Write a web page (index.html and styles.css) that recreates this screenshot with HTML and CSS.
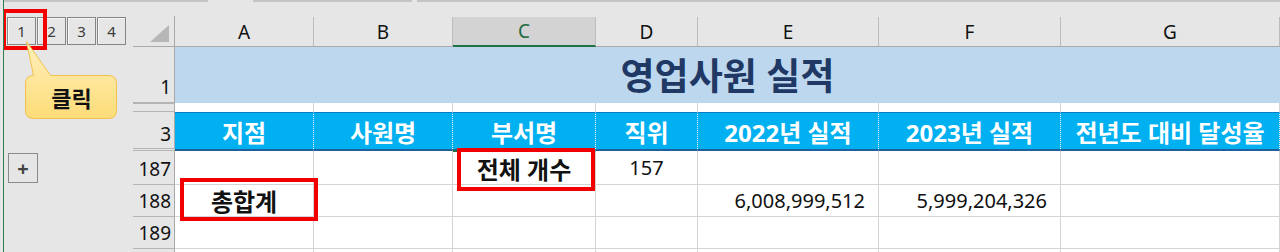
FILE: index.html
```html
<!DOCTYPE html>
<html lang="ko">
<head>
  <meta charset="UTF-8" />
  <title>영업사원 실적</title>
  <link rel="stylesheet" href="styles.css">
</head>
<body>
  <div class="app">
    <div class="top-strip">
      <span class="seg seg-1"></span>
      <span class="seg seg-2"></span>
      <span class="seg seg-3"></span>
    </div>

    <div class="main">
      <aside class="outline">
        <div class="levels">
          <span class="level">1</span>
          <span class="level">2</span>
          <span class="level">3</span>
          <span class="level">4</span>
        </div>
        <span class="expand">+</span>
      </aside>

      <div class="sheet">
        <!-- column headers -->
        <div class="corner">
          <svg width="20" height="18" viewBox="0 0 20 18"><polygon points="19,0 19,17 0,17" fill="#b7b7b7"/></svg>
        </div>
        <div class="ch">A</div>
        <div class="ch">B</div>
        <div class="ch ch-active">C</div>
        <div class="ch">D</div>
        <div class="ch">E</div>
        <div class="ch">F</div>
        <div class="ch">G</div>

        <!-- row 1 -->
        <div class="rh">1</div>
        <div class="title">영업사원 실적</div>

        <!-- row 2 (thin) -->
        <div class="rh rh-thin"></div>
        <div class="c thin"></div><div class="c thin"></div><div class="c thin"></div><div class="c thin"></div>
        <div class="c thin"></div><div class="c thin"></div><div class="c thin"></div>

        <!-- row 3 -->
        <div class="rh rh-gap">3</div>
        <div class="hd">지점</div>
        <div class="hd">사원명</div>
        <div class="hd">부서명</div>
        <div class="hd">직위</div>
        <div class="hd">2022년 실적</div>
        <div class="hd">2023년 실적</div>
        <div class="hd">전년도 대비 달성율</div>

        <!-- row 187 -->
        <div class="rh">187</div>
        <div class="c"></div>
        <div class="c"></div>
        <div class="c center bold active">전체 개수</div>
        <div class="c center">157</div>
        <div class="c"></div>
        <div class="c"></div>
        <div class="c"></div>

        <!-- row 188 -->
        <div class="rh">188</div>
        <div class="c center bold">총합계</div>
        <div class="c"></div>
        <div class="c"></div>
        <div class="c"></div>
        <div class="c num">6,008,999,512</div>
        <div class="c num">5,999,204,326</div>
        <div class="c"></div>

        <!-- row 189 -->
        <div class="rh">189</div>
        <div class="c"></div><div class="c"></div><div class="c"></div><div class="c"></div>
        <div class="c"></div><div class="c"></div><div class="c"></div>

        <!-- row 190 -->
        <div class="rh"></div>
        <div class="c"></div><div class="c"></div><div class="c"></div><div class="c"></div>
        <div class="c"></div><div class="c"></div><div class="c"></div>
      </div>
    </div>

    <!-- annotations -->
    <div class="mark mark-level"></div>
    <div class="callout">
      <svg class="callout-shape" width="102" height="85" viewBox="0 0 102 85">
        <defs>
          <linearGradient id="cg" x1="0" y1="0" x2="0" y2="1">
            <stop offset="0" stop-color="#fff0bd"/>
            <stop offset="1" stop-color="#fddc78"/>
          </linearGradient>
        </defs>
        <path d="M13.5,37.5 L6.5,3.5 L30.5,37.5 H88.5 Q96.5,37.5 96.5,45.5 V72.5 Q96.5,80.5 88.5,80.5 H13.5 Q5.5,80.5 5.5,72.5 V45.5 Q5.5,37.5 13.5,37.5 Z"
              fill="url(#cg)" stroke="#f2c14e" stroke-width="1"/>
      </svg>
      <span class="callout-text">클릭</span>
    </div>
    <div class="mark mark-count"></div>
    <div class="mark mark-total"></div>
  </div>
</body>
</html>
```

FILE: styles.css
```css
body {
  margin: 0;
  padding: 0;
  background-color: #e6e6e6;
  font-family: "Noto Sans", "Noto Sans CJK KR", sans-serif;
  width: 1280px;
  height: 252px;
  overflow: hidden;
}

.app {
  position: relative;
  margin-left: 3px;
  border-left: 1px solid #2f7d4f;
  height: 252px;
  overflow: hidden;
}

/* thin line at the very top */
.top-strip {
  height: 16px;
  display: flex;
  gap: 45px;
}

.seg {
  height: 2px;
  background-color: #c4c4c4;
}

.seg-1 { width: 204px; }
.seg-2 { width: 159px; }
.seg-3 { flex: 1; margin-left: -40px; }

.main {
  display: flex;
}

/* outline panel on the left */
.outline {
  width: 129px;
  display: flex;
  flex-direction: column;
  align-items: flex-start;
}

.levels {
  display: flex;
  margin-top: 1px;
  margin-left: 3px;
}

.level {
  width: 29px;
  height: 28px;
  box-sizing: border-box;
  border: 1px solid #858585;
  box-shadow: inset 1px 1px 0 #f6f6f6;
  margin-right: 1px;
  display: flex;
  align-items: center;
  justify-content: center;
  font-size: 15px;
  color: #3c3c3c;
}

.expand {
  margin-top: 108px;
  margin-left: 4px;
  width: 30px;
  height: 30px;
  box-sizing: border-box;
  border: 1px solid #8a8a8a;
  display: flex;
  align-items: center;
  justify-content: center;
  font-size: 20px;
  font-weight: bold;
  color: #444;
}

/* worksheet grid */
.sheet {
  display: grid;
  grid-template-columns: 42px 139px 139px 143px 102px 181px 182px 219px;
  grid-template-rows: 31px 56px 9px 39px 34px 32px 32px 32px;
}

.corner {
  border-right: 1px solid #a9a9a9;
  border-bottom: 1px solid #a9a9a9;
  display: flex;
  justify-content: flex-end;
  align-items: flex-start;
  padding: 9px 4px 0 0;
}

.ch {
  display: flex;
  align-items: center;
  justify-content: center;
  font-size: 19px;
  color: #111;
  border-right: 1px solid #bcbcbc;
  border-bottom: 1px solid #a9a9a9;
  margin-top: 1px;
}

.ch-active {
  background-color: #d3d3d3;
  color: #1d6b40;
  border-bottom: 2px solid #217346;
}

.rh {
  display: flex;
  align-items: flex-end;
  justify-content: flex-end;
  padding: 0 3px 3px 0;
  font-size: 19px;
  line-height: 1.2;
  color: #111;
  border-right: 1px solid #a9a9a9;
  border-bottom: 1px solid #b4b4b4;
}

.rh-thin {
  padding: 0;
  border-top: 1px solid #b4b4b4;
  box-sizing: border-box;
}

.rh-gap {
  border-bottom: 3px double #b4b4b4;
  padding-bottom: 2px;
}

.title {
  grid-column: span 7;
  background-color: #bdd7ee;
  display: flex;
  align-items: center;
  justify-content: center;
  font-size: 37px;
  font-weight: bold;
  color: #203864;
  padding-bottom: 2px;
}

.c {
  background-color: white;
  border-right: 1px solid #d4d4d4;
  border-bottom: 1px solid #d4d4d4;
  display: flex;
  align-items: center;
  font-size: 20px;
  color: #111;
}

.thin {
  border-bottom: none;
}

.hd {
  background-color: #00b0f0;
  border-top: 1px solid #0a7cc4;
  border-bottom: 2px solid #1f5f9e;
  border-right: 1px dotted #dff4fd;
  display: flex;
  align-items: center;
  justify-content: center;
  font-size: 24px;
  font-weight: bold;
  color: white;
}

.center {
  justify-content: center;
}

.bold {
  font-weight: bold;
  font-size: 24px;
}

.num {
  justify-content: flex-end;
  padding-right: 13px;
}

.active {
  border-top: 2px solid #217346;
  margin-top: -1px;
}

/* annotations */
.mark {
  position: absolute;
  box-sizing: border-box;
  border: 4px solid #f20000;
}

.mark-level {
  left: -2px;
  top: 9px;
  width: 45px;
  height: 41px;
}

.mark-count {
  left: 453px;
  top: 148px;
  width: 138px;
  height: 43px;
}

.mark-total {
  left: 176px;
  top: 178px;
  width: 138px;
  height: 43px;
}

.callout {
  position: absolute;
  left: 16px;
  top: 38px;
  width: 102px;
  height: 85px;
}

.callout-shape {
  position: absolute;
  left: 0;
  top: 0;
}

.callout-text {
  position: absolute;
  left: 6px;
  top: 38px;
  width: 91px;
  height: 42px;
  display: flex;
  align-items: center;
  justify-content: center;
  font-size: 22px;
  font-weight: bold;
  color: #111;
}
```
